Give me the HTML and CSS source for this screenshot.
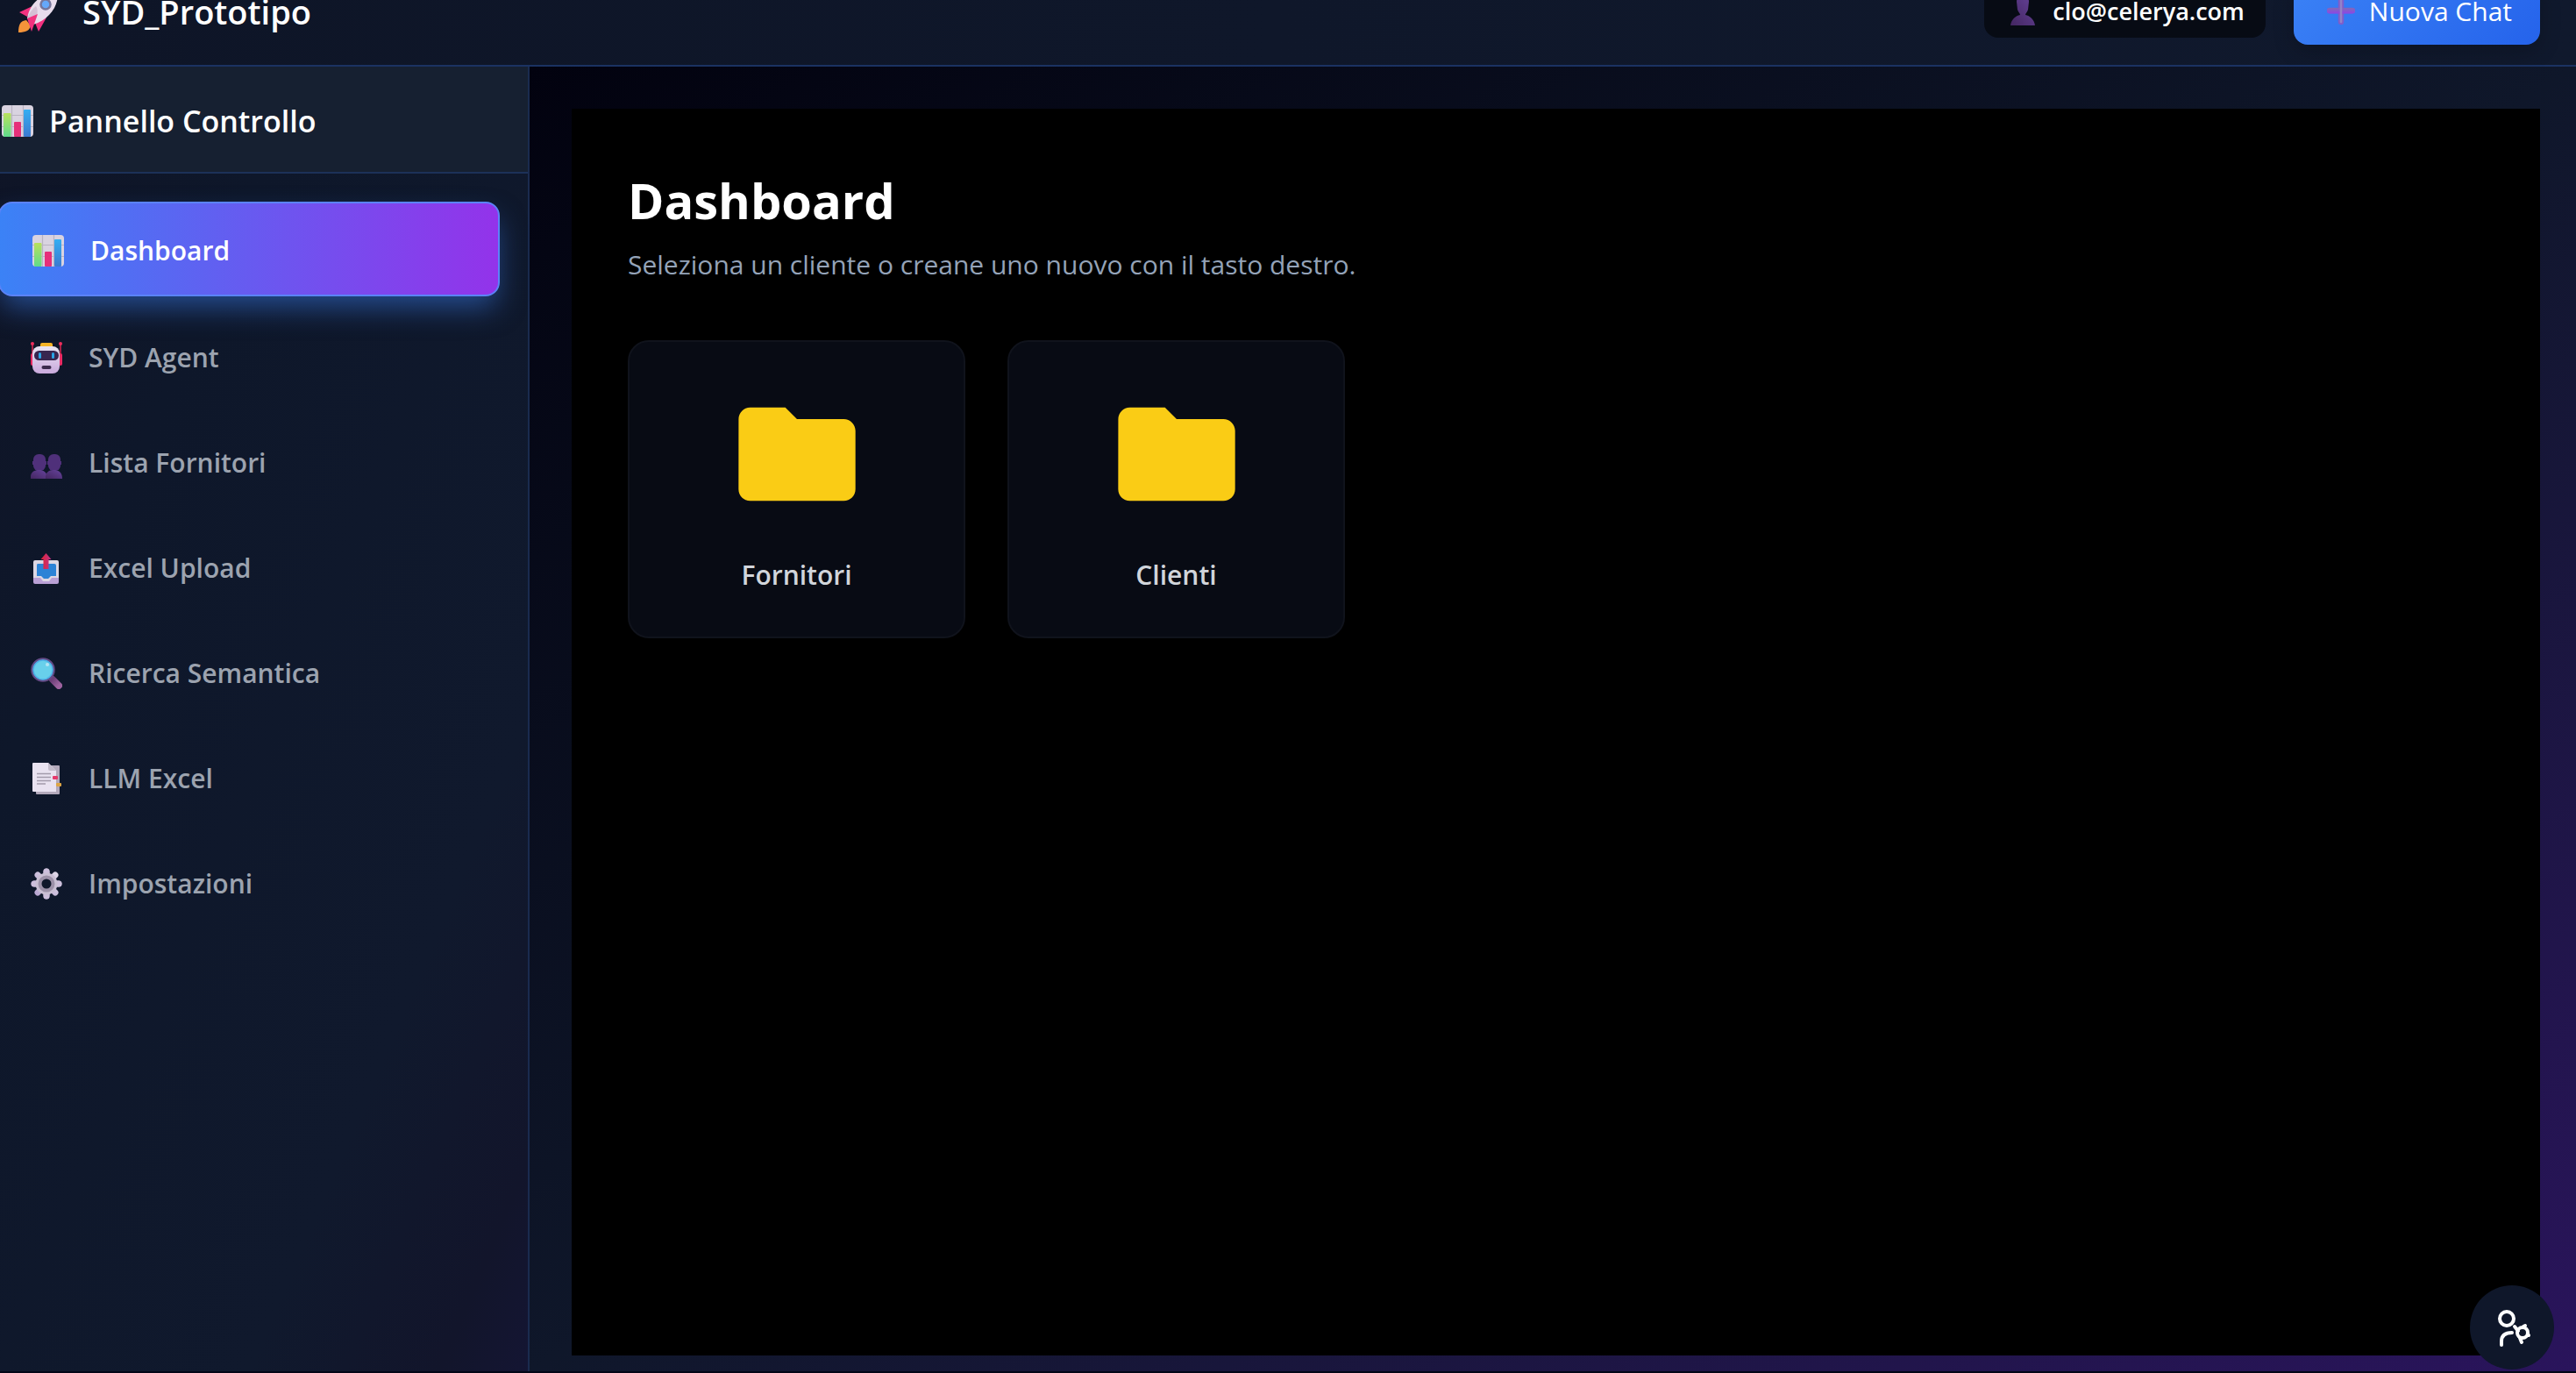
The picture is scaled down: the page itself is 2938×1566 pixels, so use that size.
FILE: index.html
```html
<!DOCTYPE html>
<html lang="it">
<head>
<meta charset="utf-8">
<meta name="viewport" content="width=device-width, initial-scale=1">
<title>SYD_Prototipo</title>
<link rel="stylesheet" href="styles.css">
</head>
<body>
<svg class="defs" aria-hidden="true">
  <defs>
    <linearGradient id="gGreen" x1="0" y1="0" x2="0" y2="1"><stop offset="0" stop-color="#b9e05c"/><stop offset="1" stop-color="#5fdb8c"/></linearGradient>
    <linearGradient id="gBlue" x1="0" y1="0" x2="0" y2="1"><stop offset="0" stop-color="#35aef2"/><stop offset="1" stop-color="#3b7ad0"/></linearGradient>
    <linearGradient id="gLilac" x1="0" y1="0" x2="0" y2="1"><stop offset="0" stop-color="#e9e4f2"/><stop offset="1" stop-color="#c9a9dc"/></linearGradient>
    <linearGradient id="gSteel" x1="1" y1="0" x2="0" y2="1"><stop offset="0" stop-color="#e2dbe9"/><stop offset="1" stop-color="#b5a2cf"/></linearGradient>
    <linearGradient id="gPurple" x1="1" y1="0" x2="0" y2="1"><stop offset="0" stop-color="#66439c"/><stop offset="1" stop-color="#432660"/></linearGradient>
    <linearGradient id="gPlus" x1="0" y1="0" x2="0" y2="1"><stop offset="0" stop-color="#7f6bb8"/><stop offset="1" stop-color="#8e45e6"/></linearGradient>
    <linearGradient id="gHandle" x1="0" y1="0" x2="1" y2="1"><stop offset="0" stop-color="#6d3f78"/><stop offset="1" stop-color="#9d629f"/></linearGradient>
    <linearGradient id="gArrow" x1="0" y1="0" x2="1" y2="0"><stop offset="0" stop-color="#df2430"/><stop offset="1" stop-color="#c2318c"/></linearGradient>
    <symbol id="chart" viewBox="0 0 36 36">
      <rect width="36" height="36" rx="4" fill="#d9d3e0"/>
      <path d="M11.500 0v36M24.500 0v36M0 11.500h36M0 24.500h36" stroke="#b9b3c2" stroke-width="1.200"/>
      <rect x="2" y="9" width="8.500" height="27" rx="1" fill="url(#gGreen)"/>
      <rect x="14" y="19" width="8" height="17" rx="1" fill="#e6307a"/>
      <rect x="25" y="5" width="8" height="31" rx="1" fill="url(#gBlue)"/>
    </symbol>
  </defs>
</svg>

<div class="app">
  <header class="topbar">
    <div class="brand">
      <svg class="brand-icon" viewBox="0 0 48 48" aria-hidden="true">
        <path d="M10 34c-7 1-9 5-9 14 8 0 13-2 14-8z" fill="#f5943a"/>
        <path d="M17 18L2 25l9 5zM33 31l-9 16-4-10z" fill="#f2317f"/>
        <path d="M11 32C13 17 26 3 46 1c1 18-10 32-28 38z" fill="#e8dcec"/>
        <path d="M37 2c4-1 7-1 9-1 0 3 0 6-1 9z" fill="#ef3350"/>
        <path d="M11 32c3-7 6-11 10-14 3 4 2 11-3 21z" fill="#d5bfd5"/>
        <path d="M11 32l12-5-7 20z" fill="#f2317f"/>
        <circle cx="32" cy="16" r="5.500" fill="#65a8fa" stroke="#77769b" stroke-width="2.500"/>
      </svg>
      <span>SYD_Prototipo</span>
    </div>
    <div class="actions">
      <div class="user">
        <svg class="user-icon" viewBox="0 0 28 36" aria-hidden="true"><path d="M7 8c0-11 14-11 14 0l-1 9c-1 3-3 4-3 6 5 1 10 5 11 12H0c1-7 6-11 11-12 0-2-2-3-3-6z" fill="url(#gPurple)"/></svg>
        <span>clo@celerya.com</span>
      </div>
      <button class="new-chat" type="button">
        <svg class="plus-icon" viewBox="0 0 32 32" aria-hidden="true"><path d="M16 3v26M3 16h26" stroke="#7f5cc9" stroke-width="6.500" stroke-linecap="round"/><rect x="0" y="13" width="32" height="6.500" rx="3" fill="url(#gPlus)"/><path d="M16 2v27" stroke="#9483c8" stroke-width="2.500" stroke-linecap="round"/></svg>
        <span>Nuova Chat</span>
      </button>
    </div>
  </header>

  <div class="body">
    <aside class="sidebar">
      <h2 class="side-title"><svg class="icon" aria-hidden="true"><use href="#chart"/></svg><span>Pannello Controllo</span></h2>
      <nav class="menu">
        <a class="item active" href="#dashboard"><svg class="icon" aria-hidden="true"><use href="#chart"/></svg>Dashboard</a>
        <a class="item" href="#agent"><svg class="icon" viewBox="0 0 36 36" aria-hidden="true">
          <path d="M2 2v14M34 2v14" stroke="#d9264f" stroke-width="1.500"/><circle cx="2" cy="2" r="2" fill="#ee2d5c"/><circle cx="34" cy="2" r="2" fill="#ee2d5c"/>
          <rect x="0" y="13" width="4" height="14" rx="2" fill="#e92a63"/><rect x="32" y="13" width="4" height="14" rx="2" fill="#e92a63"/>
          <rect x="11" y="1" width="14" height="7" rx="2" fill="#f5b325"/><rect x="2" y="5" width="31" height="31" rx="8" fill="url(#gLilac)"/>
          <rect x="4" y="10" width="28" height="11" rx="5.500" fill="#38264f"/><rect x="9" y="12" width="3" height="7" rx="1.500" fill="#2aa5e6"/><rect x="24" y="12" width="3" height="7" rx="1.500" fill="#2aa5e6"/>
          <rect x="12.500" y="27" width="11" height="4" rx="2" fill="#3b2a4d"/></svg>SYD Agent</a>
        <a class="item" href="#fornitori"><svg class="icon" viewBox="0 0 36 36" aria-hidden="true">
          <g id="bust"><rect x="3" y="8" width="14" height="19" rx="6" fill="#4f307a"/><path d="M2 16h16v4H2z" fill="#4f307a"/><path d="M0 36c-1-7 4-10 9-10s10 2 10 10z" fill="url(#gPurple)"/></g>
          <use href="#bust" x="17"/></svg>Lista Fornitori</a>
        <a class="item" href="#upload"><svg class="icon" viewBox="0 0 36 36" aria-hidden="true">
          <rect x="3" y="24" width="29" height="12" rx="2" fill="#b9a0d5"/><path d="M5 9h25q2 0 2 2v18h-8l-3 4h-7l-3-4H3V11q0-2 2-2z" fill="#dcd7e3"/>
          <path d="M8 13h19q2 0 2 2v12h-6l-3 3h-5l-3-3H7V15q0-2 1-2z" fill="#2c83d6"/><path d="M17.500 1l6 7h-3v11h-6V8h-3z" fill="url(#gArrow)"/></svg>Excel Upload</a>
        <a class="item" href="#ricerca"><svg class="icon" viewBox="0 0 36 36" aria-hidden="true">
          <path d="M25 25l7 7" stroke="url(#gHandle)" stroke-width="8" stroke-linecap="round"/>
          <circle cx="14" cy="14" r="12.500" fill="#68d0eb" stroke="#634b87" stroke-width="2.500"/><circle cx="14" cy="14" r="11" fill="none" stroke="#4cb2e8" stroke-width="1.500"/><circle cx="19" cy="8" r="2" fill="#b5e4f4"/></svg>Ricerca Semantica</a>
        <a class="item" href="#llm"><svg class="icon" viewBox="0 0 36 36" aria-hidden="true">
          <rect x="6" y="3" width="27" height="33" rx="1" fill="#b3a9bb"/><path d="M3 0h17l9 9v24H3q-1 0-1-1V1q0-1 1-1z" fill="#e9e2f0"/><path d="M20 0l9 9h-7q-2 0-2-2z" fill="#c4bccb"/>
          <path d="M7 12.500h16M7 16.500h16M7 20.500h16M7 24h10" stroke="#a39bab" stroke-width="1.500"/><rect x="25" y="15" width="6" height="4" rx="1" fill="#e5396c"/><rect x="29" y="23" width="6" height="4" rx="1" fill="#dda544"/></svg>LLM Excel</a>
        <a class="item" href="#impostazioni"><svg class="icon" viewBox="0 0 36 36" aria-hidden="true">
          <path d="M18 4v28M4 18h28M8 8l20 20M28 8L8 28" stroke="url(#gSteel)" stroke-width="7" stroke-linecap="round"/>
          <path d="M18 4v4M18 28v4M4 18h4M28 18h4" stroke="#cdbfdc" stroke-width="7" stroke-linecap="round"/>
          <circle cx="18" cy="18" r="9" fill="#10182b" stroke="#c9bfd3" stroke-width="7"/><circle cx="18" cy="18" r="7.500" fill="#10182b" stroke="#9c91a8" stroke-width="4"/></svg>Impostazioni</a>
      </nav>
    </aside>

    <main class="main">
      <section class="panel">
        <h1>Dashboard</h1>
        <p class="hint">Seleziona un cliente o creane uno nuovo con il tasto destro.</p>
        <div class="folders">
          <button class="folder" type="button"><svg class="folder-icon" viewBox="0 0 24 24" aria-hidden="true"><path d="M10 4H4c-1.100 0-1.990.900-1.990 2L2 18c0 1.100.900 2 2 2h16c1.100 0 2-.900 2-2V8c0-1.100-.900-2-2-2h-8l-2-2z" fill="currentColor"/></svg><span>Fornitori</span></button>
          <button class="folder" type="button"><svg class="folder-icon" viewBox="0 0 24 24" aria-hidden="true"><path d="M10 4H4c-1.100 0-1.990.900-1.990 2L2 18c0 1.100.900 2 2 2h16c1.100 0 2-.900 2-2V8c0-1.100-.900-2-2-2h-8l-2-2z" fill="currentColor"/></svg><span>Clienti</span></button>
        </div>
      </section>
    </main>
  </div>
</div>

<button class="fab" type="button" aria-label="Impostazioni utente">
  <svg viewBox="0 0 96 96" fill="none" stroke="currentColor" stroke-width="4" stroke-linecap="round" aria-hidden="true">
    <circle cx="42" cy="38" r="8"/><path d="M36 68v-4q0-10 12-10"/>
    <circle cx="60" cy="54" r="6"/><path d="M55 52l-4-5M61 47l2-1M66 56l1 1M57 60l2 5"/>
  </svg>
</button>
</body>
</html>
```
FILE: styles.css
```css
* { box-sizing: border-box; }

body {
  margin: 0;
  min-height: 100vh;
  overflow: hidden;
  background: #020617;
  color: #fff;
  font-family: "Segoe UI", "Open Sans", "Noto Sans", sans-serif;
  font-size: 30px;
}

button { font-family: inherit; cursor: pointer; }
.defs { position: absolute; width: 0; height: 0; }

/* The shell bleeds past the top and left edges of the window */
.app {
  display: flex;
  flex-direction: column;
  height: calc(100vh + 46px);
  margin: -48px 0 0 -34px;
}

.topbar {
  display: flex;
  align-items: center;
  justify-content: space-between;
  flex: none;
  height: 124px;
  padding: 0 41px 0 54px;
  border-bottom: 2px solid #1b3262;
  background: linear-gradient(90deg, #0e1527, #10192d);
}

.brand { display: flex; align-items: center; gap: 26px; font-size: 38px; font-weight: 600; }
.brand-icon { width: 48px; height: 48px; }

.actions { display: flex; align-items: center; gap: 32px; }
.user {
  display: flex;
  align-items: center;
  gap: 20px;
  height: 60px;
  padding: 0 24px 2px 30px;
  border-radius: 16px;
  background: #070b14;
  font-size: 27px;
  font-weight: 600;
}
.user-icon { width: 28px; height: 36px; }

.new-chat {
  display: flex;
  align-items: center;
  gap: 16px;
  height: 76px;
  padding: 0 32px 2px 38px;
  border: 0;
  border-radius: 16px;
  background: linear-gradient(135deg, #3b82f6, #2563eb);
  box-shadow: 0 8px 24px rgba(0, 0, 0, .2);
  color: #fff;
  font-size: 30px;
}
.plus-icon { width: 32px; height: 32px; }

.body { display: flex; flex: 1; min-height: 0; }

.sidebar {
  flex: none;
  width: 638px;
  border-right: 2px solid #1a2b4f;
  background: linear-gradient(to bottom right, #0f1426, #0e172a 30%, #10192d 75%, #12152b 92%, #141533);
}
.side-title {
  display: flex;
  align-items: center;
  gap: 18px;
  height: 122px;
  margin: 0;
  padding: 3px 36px 0;
  border-bottom: 2px solid #1c3158;
  background: #162031;
  font-size: 34px;
  font-weight: 600;
}
.icon { flex: none; width: 36px; height: 36px; }

.menu { display: flex; flex-direction: column; gap: 16px; padding: 32px; }
.item {
  display: flex;
  align-items: center;
  gap: 30px;
  height: 104px;
  padding: 3px 37px 0;
  color: #9ca3af;
  font-weight: 600;
  text-decoration: none;
}
.item.active {
  height: 108px;
  border: 2px solid #5b83f8;
  border-radius: 16px;
  background: linear-gradient(90deg, #3b82f6, #9333ea);
  box-shadow: 0 16px 32px -4px rgba(59, 130, 246, .5);
  color: #fff;
}

.main {
  flex: 1;
  min-width: 0;
  padding: 48px 41px 18px 48px;
  background: linear-gradient(to bottom right, #02020f, #0f172a 50%, #2a145c);
}
.panel { height: 100%; padding: 64px; background: #000; }
h1 { margin: 0; font-size: 56px; line-height: 80px; font-weight: 700; }
.hint { margin: 10px 0 62px; color: #94a3b8; line-height: 48px; }

.folders { display: grid; grid-template-columns: repeat(5, minmax(0, 1fr)); gap: 48px; }
.folder {
  display: flex;
  flex-direction: column;
  align-items: center;
  gap: 34px;
  padding: 48px 48px 46px;
  border: 2px solid #10131c;
  border-radius: 24px;
  background: #080b14;
  color: #d1d5db;
  font-size: 30px;
  line-height: 48px;
  font-weight: 600;
}
.folder-icon { width: 160px; height: 160px; color: #facc15; }

.fab {
  position: fixed;
  right: 25px;
  bottom: 4px;
  width: 96px;
  height: 96px;
  padding: 0;
  border: 0;
  border-radius: 50%;
  background: #0f172a;
  color: #fff;
}
.fab svg { display: block; width: 96px; height: 96px; }
```
